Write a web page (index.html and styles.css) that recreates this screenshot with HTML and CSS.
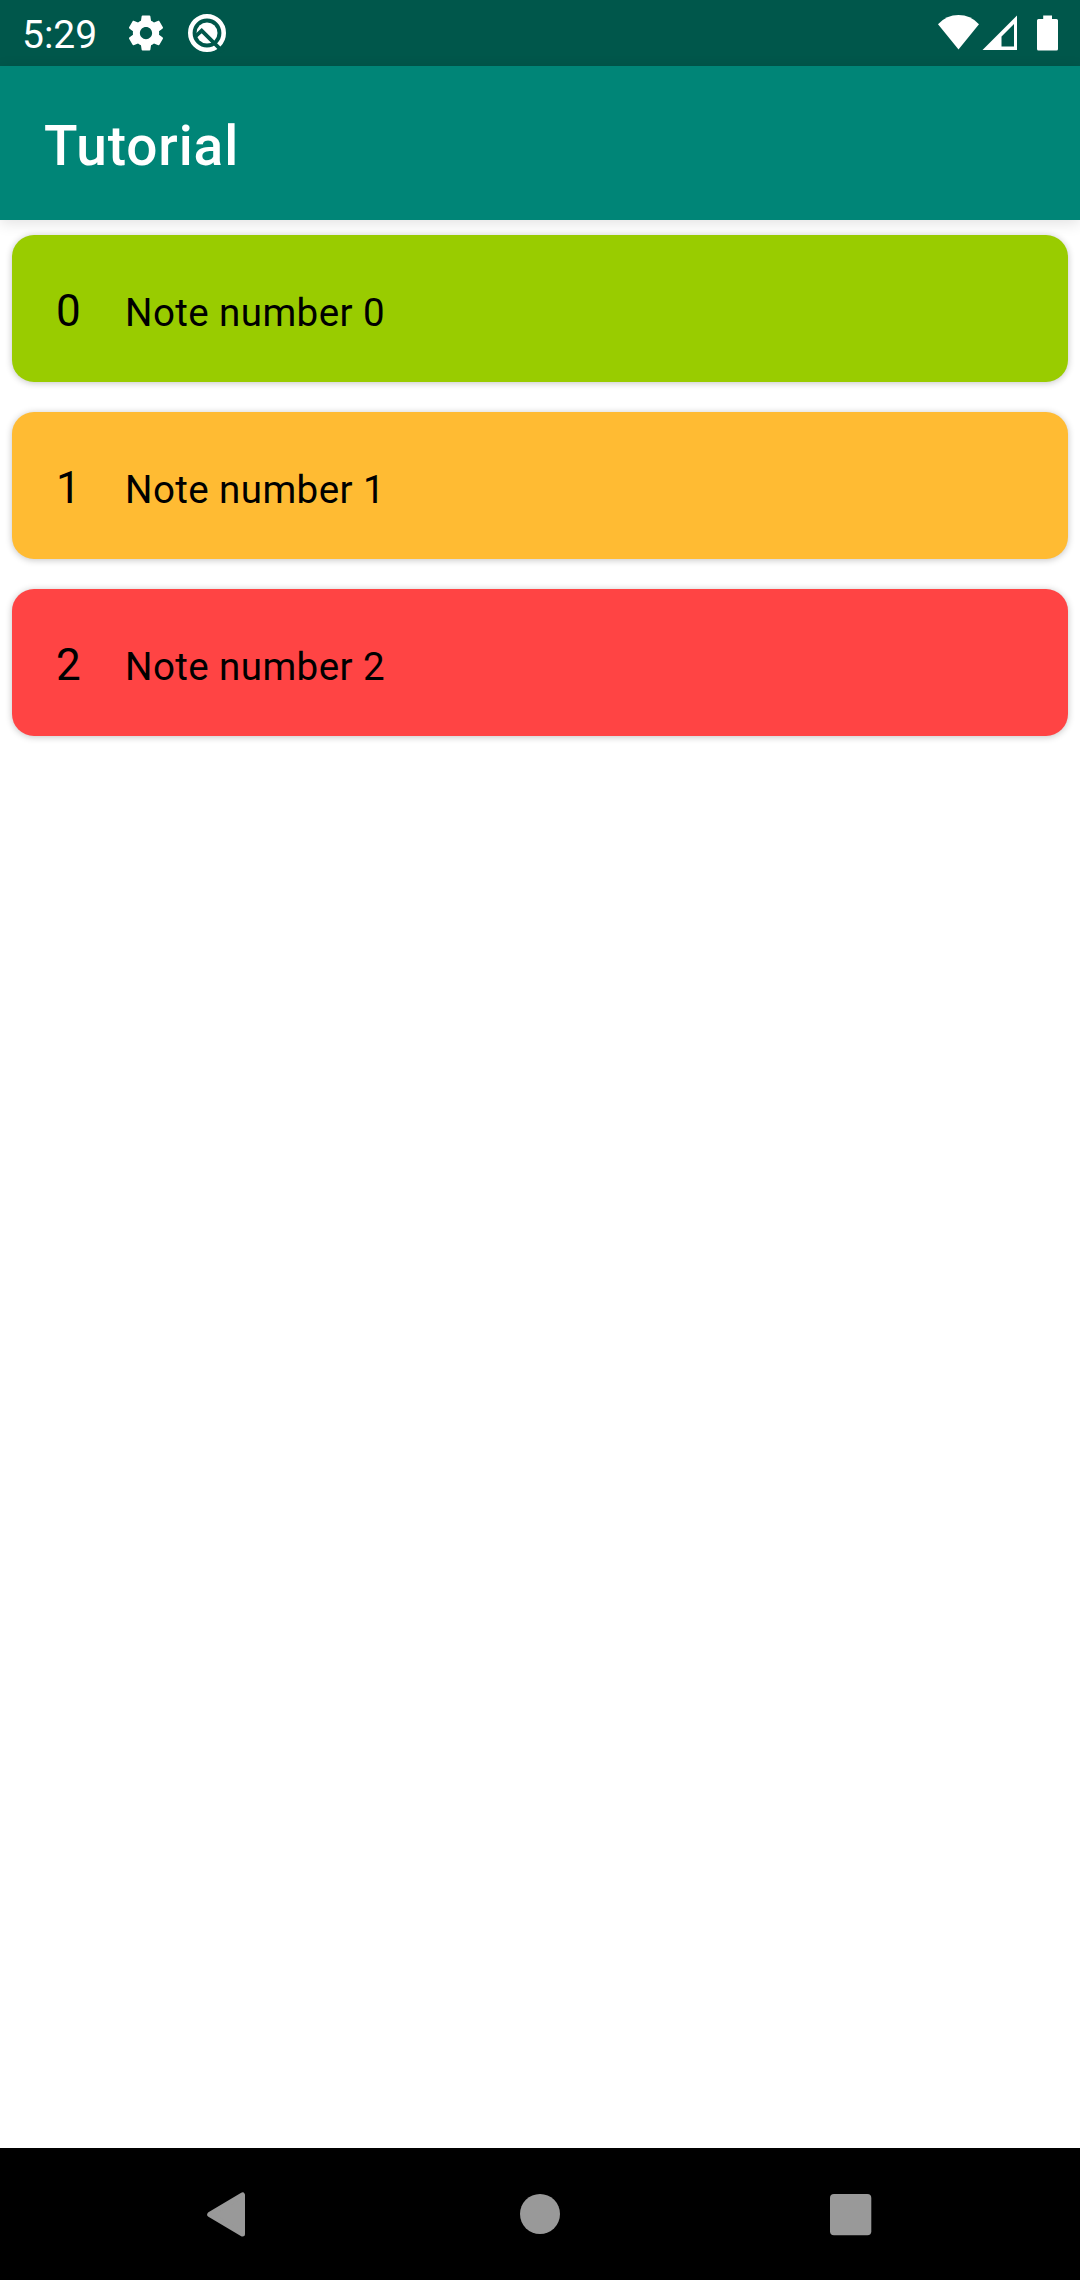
FILE: index.html
```html
<!DOCTYPE html>
<html lang="en">
<head>
<meta charset="utf-8">
<title>Tutorial</title>
<link rel="stylesheet" href="styles.css">
</head>
<body>
<div class="screen">
  <div class="status-bar">
    <span class="clock">5:29</span>
    <svg class="icon-settings" viewBox="0 0 24 24"><path d="M19.43 12.98c.04-.32.07-.64.07-.98s-.03-.66-.07-.98l2.11-1.65c.19-.15.24-.42.12-.64l-2-3.46c-.12-.22-.39-.3-.61-.22l-2.49 1c-.52-.4-1.08-.73-1.69-.98l-.38-2.65C14.46 2.18 14.25 2 14 2h-4c-.25 0-.46.18-.49.42l-.38 2.65c-.61.25-1.17.59-1.69.98l-2.49-1c-.23-.09-.49 0-.61.22l-2 3.46c-.13.22-.07.49.12.64l2.11 1.65c-.04.32-.07.65-.07.98s.03.66.07.98l-2.11 1.65c-.19.15-.24.42-.12.64l2 3.46c.12.22.39.3.61.22l2.49-1c.52.4 1.08.73 1.69.98l.38 2.65c.03.24.24.42.49.42h4c.25 0 .46-.18.49-.42l.38-2.65c.61-.25 1.17-.59 1.69-.98l2.49 1c.23.09.49 0 .61-.22l2-3.46c.12-.22.07-.49-.12-.64l-2.11-1.65zM12 15.5c-1.93 0-3.5-1.57-3.5-3.5s1.57-3.5 3.5-3.5 3.5 1.57 3.5 3.5-1.57 3.5-3.5 3.5z"/></svg>
    <svg class="icon-q" viewBox="0 0 40 40">
      <circle class="q-ring" cx="20" cy="20" r="16.7"/>
      <circle cx="20" cy="20" r="10.5"/>
      <path class="q-cut" d="M8.500 23.300L14.700 17.600L36 38.900"/>
    </svg>
    <span class="spacer"></span>
    <svg class="icon-network" viewBox="0 0 80 36"><path d="M0 9.2Q8.5 0 20.5 0T41 9.2L20.500 34.600Z"/><path fill-rule="evenodd" d="M44.500 35H79V.5ZM63.500 21.500V31.500H76V9Z"/></svg>
    <svg class="icon-battery" viewBox="0 0 21 36"><path d="M6.200 .5H15V4H19.500Q21 4 21 5.500V34Q21 35.500 19.500 35.500H1.500Q0 35.500 0 34V5.500Q0 4 1.500 4H6.200Z"/></svg>
  </div>
  <header class="app-bar"><h1 class="title">Tutorial</h1></header>
  <main class="notes">
    <article class="note green"><span class="note-id">0</span><span class="note-text">Note number 0</span></article>
    <article class="note orange"><span class="note-id">1</span><span class="note-text">Note number 1</span></article>
    <article class="note red"><span class="note-id">2</span><span class="note-text">Note number 2</span></article>
  </main>
  <nav class="nav-bar">
    <svg class="nav-icon" viewBox="0 0 48 48"><path class="nav-back" d="M4.700 24.500L37.500 5V44Z"/></svg>
    <svg class="nav-icon" viewBox="0 0 48 48"><circle cx="24" cy="24" r="20"/></svg>
    <svg class="nav-icon" viewBox="0 0 48 48"><rect x="3" y="4" width="41.300" height="41.300" rx="4"/></svg>
  </nav>
</div>
</body>
</html>
```
FILE: styles.css
```css
* { box-sizing: border-box; }
body { margin: 0; font-family: Roboto, sans-serif; background: #fff; }
svg { display: block; flex: none; }
.screen { display: flex; flex-direction: column; width: 1080px; height: 2280px; overflow: hidden; }
.status-bar { display: flex; align-items: center; height: 66px; padding: 0 22px; background: #00574b; color: #fff; fill: #fff; }
.clock { width: 75px; font-size: 39px; line-height: 46px; white-space: nowrap; padding-top: 3px; }
.icon-settings { width: 42px; height: 42px; margin-left: 28px; }
.icon-q { width: 40px; height: 40px; margin-left: 20px; }
.q-ring { fill: none; stroke: #fff; stroke-width: 4.600; }
.q-cut { fill: none; stroke: #00574b; stroke-width: 3.800; }
.spacer { flex: 1; }
.icon-network { width: 80px; height: 36px; }
.icon-battery { width: 21px; height: 36px; margin-left: 19px; }
.app-bar { position: relative; z-index: 1; display: flex; align-items: center; height: 154px; padding: 5px 44px 0; background: #008577; box-shadow: 0 3px 14px rgba(0, 0, 0, .12); }
.title { margin: 0; color: #fff; font-size: 55px; font-weight: 500; line-height: 64px; letter-spacing: .9px; }
.notes { flex: 1; display: flex; flex-direction: column; gap: 30px; padding: 15px 12px; }
.note { display: flex; align-items: baseline; gap: 43.500px; height: 147px; padding: 50px 44px 0; border-radius: 22px; color: #000; box-shadow: 0 1px 7px rgba(0, 0, 0, .24); }
.note-id { font-size: 44px; line-height: 52px; letter-spacing: .8px; }
.note-text { font-size: 38.500px; line-height: 46px; letter-spacing: .42px; }
.green { background: #9c0; }
.orange { background: #fb3; }
.red { background: #f44; }
.nav-bar { display: flex; align-items: center; justify-content: center; gap: 263px; height: 132px; background: #000; fill: #999; }
.nav-icon { width: 48px; height: 48px; }
.nav-back { stroke: #999; stroke-width: 5; stroke-linejoin: round; }
```
